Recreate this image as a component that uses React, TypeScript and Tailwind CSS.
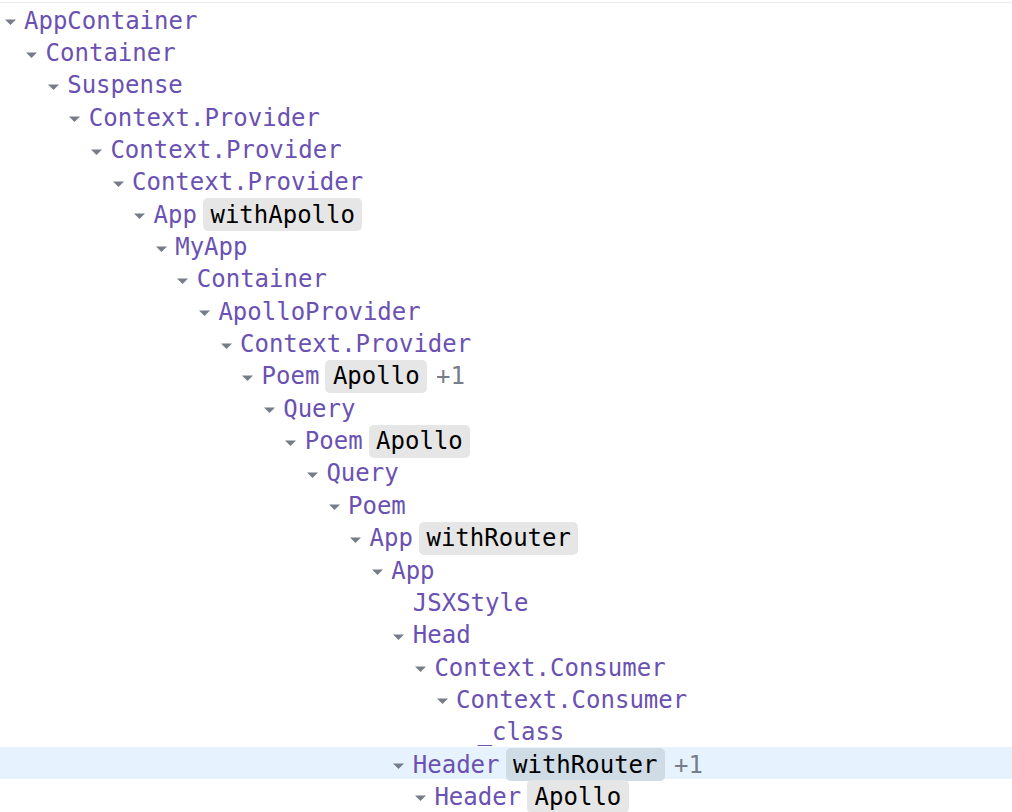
import React from "react";

type Row = { level: number; name: string; badge?: string; extra?: string; leaf?: boolean; hover?: boolean };

const rows: Row[] = [
  { level: 0, name: "AppContainer" },
  { level: 1, name: "Container" },
  { level: 2, name: "Suspense" },
  { level: 3, name: "Context.Provider" },
  { level: 4, name: "Context.Provider" },
  { level: 5, name: "Context.Provider" },
  { level: 6, name: "App", badge: "withApollo" },
  { level: 7, name: "MyApp" },
  { level: 8, name: "Container" },
  { level: 9, name: "ApolloProvider" },
  { level: 10, name: "Context.Provider" },
  { level: 11, name: "Poem", badge: "Apollo", extra: "+1" },
  { level: 12, name: "Query" },
  { level: 13, name: "Poem", badge: "Apollo" },
  { level: 14, name: "Query" },
  { level: 15, name: "Poem" },
  { level: 16, name: "App", badge: "withRouter" },
  { level: 17, name: "App" },
  { level: 18, name: "JSXStyle", leaf: true },
  { level: 18, name: "Head" },
  { level: 19, name: "Context.Consumer" },
  { level: 20, name: "Context.Consumer" },
  { level: 21, name: "_class", leaf: true },
  { level: 18, name: "Header", badge: "withRouter", extra: "+1", hover: true },
  { level: 19, name: "Header", badge: "Apollo" },
];

function Arrow() {
  return (
    <svg width="11" height="6" viewBox="0 0 11 6" className="mt-[3px]">
      <polygon points="0,0.5 11,0.5 5.5,6" fill="#777d88" />
    </svg>
  );
}

export default function App() {
  return (
    <div
      className="w-[1012px] h-[812px] overflow-hidden bg-white"
      style={{ fontFamily: '"DejaVu Sans Mono", "Liberation Mono", monospace' }}
    >
      <div className="mt-[2px] border-t-[1.5px] border-[#ebebeb]" />
      <div className="flex flex-col">
        {rows.map((r, i) => (
          <div
            key={i}
            className={`flex items-center h-[32.35px] pt-[3px] whitespace-nowrap text-[24px] ${r.hover ? "bg-[#e6f3fe]" : ""}`}
            style={{ paddingLeft: r.level * 21.6 }}
          >
            <div className="w-[24px] shrink-0 pl-[4.5px] flex items-center">{r.leaf ? null : <Arrow />}</div>
            <span className="text-[#6a51b2]">{r.name}</span>
            {r.badge && (
              <span
                className={`ml-[6px] h-[33px] flex items-center px-[7.5px] rounded-[5px] text-black ${r.hover ? "bg-[#cfdbe5]" : "bg-[#e6e6e6]"}`}
              >
                {r.badge}
              </span>
            )}
            {r.extra && <span className="ml-[9px] text-[#777d88]">{r.extra}</span>}
          </div>
        ))}
      </div>
    </div>
  );
}
